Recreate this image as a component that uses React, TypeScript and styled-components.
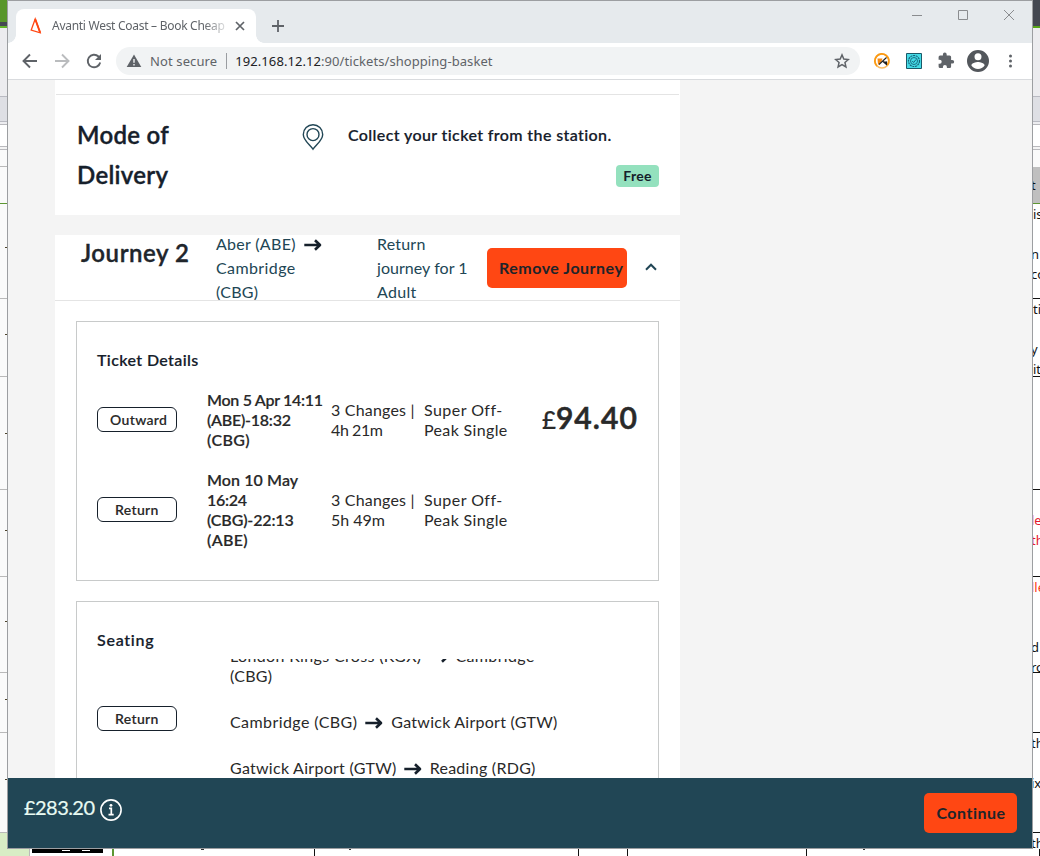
import React from "react";
import styled, { createGlobalStyle } from "styled-components";

const Global = createGlobalStyle`
  * { box-sizing: border-box; }
  body { margin: 0; background: #fff; overflow: hidden; }
`;

const ink = "#16202b";
const body = "#292929";
const teal = "#214655";
const orange = "#ff4713";
const rule = "#e4e4e4";

/* ---------- Desktop and the spreadsheet window behind ---------- */

const Desktop = styled.div`
  position: relative;
  width: 1040px;
  height: 856px;
  overflow: hidden;
  background: #fff;
`;

const Backdrop = styled.div`
  display: flex;
  flex-direction: column;
  height: 856px;
`;

const BackdropMain = styled.div`
  display: flex;
  justify-content: space-between;
  height: 849px;
`;

const Gutter = styled.div<{ $w: number }>`
  display: flex;
  flex-direction: column;
  width: ${(p) => p.$w}px;
  overflow: hidden;
`;

const Cell = styled.div<{ $h: number; $bg?: string; $line?: string; $pt?: number; $c?: string }>`
  flex: none;
  height: ${(p) => p.$h}px;
  padding-top: ${(p) => p.$pt ?? 0}px;
  overflow: hidden;
  background: ${(p) => p.$bg ?? "#fff"};
  border-bottom: ${(p) => (p.$line ? `1px solid ${p.$line}` : "0")};
  color: ${(p) => p.$c ?? "#111"};
  font: 13px/20px "Noto Sans", sans-serif;
  white-space: pre;
`;

const CellText = styled.div`
  margin-left: -2px;
`;

const RowMark = styled.i<{ $y: number }>`
  display: block;
  width: 3px;
  height: 1px;
  margin: ${(p) => p.$y}px 0 0 5px;
  background: #4d432a;
`;

const BottomStrip = styled.div`
  display: flex;
  height: 7px;
  overflow: hidden;
`;

const BottomCell = styled.div<{ $w: number; $bg?: string; $line?: string; $lw?: number }>`
  flex: none;
  width: ${(p) => p.$w}px;
  height: 7px;
  background: ${(p) => p.$bg ?? "#fff"};
  border-right: ${(p) => p.$lw ?? 1}px solid ${(p) => p.$line ?? "#111"};
`;

const BlackBar = styled.div`
  display: flex;
  gap: 12px;
  width: 71px;
  height: 4px;
  margin-left: 2px;
  padding: 1px 0 0 30px;
  background: #000;
`;

const Dash = styled.i<{ $c?: string; $x?: number; $w?: number }>`
  display: block;
  width: ${(p) => p.$w ?? 8}px;
  height: 1px;
  margin-left: ${(p) => p.$x ?? 0}px;
  background: ${(p) => p.$c ?? "#fff"};
`;

/* ---------- Browser window ---------- */

const Window = styled.div`
  position: absolute;
  left: 7px;
  top: 0;
  display: flex;
  flex-direction: column;
  width: 1026px;
  height: 849px;
  border: 1px solid #9c9ea1;
  background: #f4f4f4;
`;

const TabStrip = styled.div`
  display: flex;
  height: 42px;
  padding: 8px 0 0 0;
  background: #e6eaed;
`;

const TabFoot = styled.i<{ $right?: boolean }>`
  align-self: flex-end;
  width: 8px;
  height: 8px;
  background: radial-gradient(circle at ${(p) => (p.$right ? "100%" : "0")} 0, transparent 7.5px, #fff 8px);
`;

const Tab = styled.div`
  display: flex;
  align-items: center;
  width: 240px;
  height: 34px;
  padding: 0 10px 0 13px;
  border-radius: 8px 8px 0 0;
  background: #fff;
  svg { flex: none; }
`;

const TabTitle = styled.span`
  width: 173px;
  margin: 0 10px 0 9px;
  overflow: hidden;
  white-space: nowrap;
  font: 12px/20px "Noto Sans", sans-serif;
  letter-spacing: -0.28px;
  color: #5f6368;
  -webkit-mask-image: linear-gradient(90deg, #000 152px, rgba(0, 0, 0, 0.2) 173px);
`;

const NewTab = styled.div`
  padding: 10px 0 0 7px;
`;

const Controls = styled.div`
  display: flex;
  gap: 34px;
  margin-left: auto;
  padding-right: 17px;
`;

const Toolbar = styled.div`
  display: flex;
  align-items: center;
  height: 37px;
  padding-left: 13px;
  background: #fff;
  border-bottom: 1px solid #d9dbde;
  svg { flex: none; }
`;

const ToolbarIcons = styled.div`
  display: flex;
  align-items: center;
`;

const Omnibox = styled.div`
  display: flex;
  align-items: center;
  width: 745px;
  height: 28px;
  margin-left: 13px;
  padding: 0 10px;
  border-radius: 14px;
  background: #f1f3f4;
  font: 13px/20px "Noto Sans", sans-serif;
  white-space: nowrap;
  color: #5f6368;
`;

const Security = styled.span`
  margin-left: 8px;
  padding-right: 9px;
  border-right: 1px solid #9a9da1;
  line-height: 16px;
  letter-spacing: 0.12px;
`;

const Url = styled.span`
  margin-left: 8px;
  letter-spacing: 0.07px;
  b { font-weight: 400; color: #202124; }
`;

const StarSlot = styled.span`
  display: flex;
  margin-left: auto;
`;

/* ---------- Page ---------- */

const Page = styled.main`
  display: flex;
  flex-direction: column;
  height: 698px;
  padding-left: 47px;
  overflow: hidden;
  background: #f4f4f4;
  font-family: Lato, sans-serif;
`;

const Card = styled.section<{ $h: number }>`
  flex: none;
  width: 625px;
  height: ${(p) => p.$h}px;
  margin-bottom: 20px;
  padding: 0 1px;
  overflow: hidden;
  background: #fff;
`;

const DeliveryRow = styled.div`
  display: flex;
  height: 121px;
  margin-top: 14px;
  padding: 20px 20px 0 21px;
  border-top: 1px solid ${rule};
`;

const Heading = styled.h2<{ $ls?: number }>`
  margin: 0;
  font-size: 24px;
  font-weight: 600;
  line-height: 40px;
  letter-spacing: ${(p) => p.$ls ?? 0.3}px;
  color: ${ink};
  -webkit-text-stroke: 0.35px ${ink};
`;

const DeliveryInfo = styled.div`
  flex: 1;
  display: flex;
  flex-direction: column;
  align-items: flex-end;
`;

const DeliveryText = styled.p`
  width: 311px;
  margin: 0 0 20px;
  font-size: 16px;
  font-weight: 600;
  line-height: 40px;
  letter-spacing: 0.37px;
  color: ${ink};
  -webkit-text-stroke: 0.15px ${ink};
`;

const Badge = styled.span`
  width: 43px;
  height: 22px;
  margin-top: -10px;
  border-radius: 4px;
  background: #94e1be;
  text-align: center;
  font-size: 14px;
  font-weight: 700;
  line-height: 22px;
  letter-spacing: 0.25px;
  color: ${ink};
`;

const JourneyHeader = styled.header`
  display: flex;
  height: 66px;
  margin: 0 -1px;
  border-bottom: 1px solid ${rule};
  overflow: hidden;
`;

const JourneyTitle = styled(Heading)`
  width: 161px;
  padding-left: 26px;
  line-height: 35px;
  white-space: nowrap;
  color: #22262b;
`;

const HeaderText = styled.div<{ $w: number }>`
  flex: none;
  width: ${(p) => p.$w}px;
  margin-top: -3px;
  font-size: 16px;
  line-height: 24px;
  color: ${teal};
  white-space: nowrap;
`;

const Line = styled.div<{ $ls?: number }>`
  letter-spacing: ${(p) => p.$ls ?? 0.3}px;
`;

const Station = styled.span<{ $ls: number }>`
  letter-spacing: ${(p) => p.$ls}px;
`;

const Button = styled.button<{ $w: number; $left?: boolean }>`
  flex: none;
  width: ${(p) => p.$w}px;
  height: 40px;
  padding: ${(p) => (p.$left ? "0 0 0 12px" : "0 0 0 1px")};
  border: 0;
  border-radius: 5px;
  background: ${orange};
  text-align: ${(p) => (p.$left ? "left" : "center")};
  white-space: nowrap;
  font: 700 16px/40px Lato, sans-serif;
  letter-spacing: 0.5px;
  color: #20242a;
`;

const HeaderAction = styled.div`
  display: flex;
  align-items: flex-start;
  padding-top: 13px;
`;

const Chevron = styled.svg`
  margin: 15px 0 0 18px;
`;

const Panel = styled.section<{ $h: number }>`
  width: 583px;
  height: ${(p) => p.$h}px;
  margin: 20px 0 0 20px;
  padding: 28px 20px 0;
  border: 1px solid #c8caca;
`;

const PanelTitle = styled.h3<{ $ls?: number }>`
  margin: 0;
  font-size: 16px;
  font-weight: 600;
  line-height: 20px;
  letter-spacing: ${(p) => p.$ls ?? 0.37}px;
  color: ${ink};
  -webkit-text-stroke: 0.15px ${ink};
`;

const TicketRow = styled.div<{ $h: number }>`
  display: flex;
  align-items: center;
  height: ${(p) => p.$h}px;
  margin-top: 20px;
  font-size: 16px;
  line-height: 20px;
  white-space: nowrap;
  color: ${body};
`;

const Pill = styled.span<{ $pl: number; $raised?: boolean }>`
  flex: none;
  width: 80px;
  height: 25px;
  margin-top: ${(p) => (p.$raised ? -2 : 0)}px;
  padding-left: ${(p) => p.$pl}px;
  border: 1px solid ${ink};
  border-radius: 6px;
  font-size: 14px;
  font-weight: 600;
  line-height: 23px;
  letter-spacing: 0.33px;
  color: ${body};
  -webkit-text-stroke: 0.1px ${body};
`;

const Column = styled.div<{ $w: number; $ml?: number; $bold?: boolean }>`
  flex: none;
  width: ${(p) => p.$w}px;
  margin-left: ${(p) => p.$ml ?? 0}px;
  font-weight: ${(p) => (p.$bold ? 600 : 400)};
  -webkit-text-stroke: ${(p) => (p.$bold ? 0.15 : 0)}px ${body};
`;

const Price = styled.div`
  margin: -3px 0 0 17px;
  font-size: 30px;
  font-weight: 600;
  line-height: 36px;
  letter-spacing: 1.05px;
  -webkit-text-stroke: 0.6px ${body};
  small { font-size: 24px; font-weight: 500; letter-spacing: 0; -webkit-text-stroke: 0.2px ${body}; }
`;

const SeatingBody = styled.div`
  display: flex;
  height: 130px;
  margin-top: 9px;
  overflow: hidden;
  font-size: 16px;
  line-height: 20px;
  white-space: nowrap;
  color: ${body};
`;

const SeatingPill = styled.div`
  display: flex;
  padding-top: 47px;
`;

const Legs = styled.div`
  display: flex;
  flex-direction: column;
  gap: 26px;
  margin: -13px 0 0 53px;
`;

const ArrowIcon = styled.svg<{ $ml?: number; $mr?: number }>`
  margin: 0 ${(p) => p.$mr ?? 8}px 0 ${(p) => p.$ml ?? 8}px;
  vertical-align: -1px;
`;

const Footer = styled.footer`
  display: flex;
  justify-content: space-between;
  height: 70px;
  padding: 15px 15px 0 16px;
  background: ${teal};
  font-family: Lato, sans-serif;
`;

const Total = styled.div`
  display: flex;
  gap: 6px;
  color: #e9fbf3;
  font-size: 20px;
  line-height: 29px;
  letter-spacing: -0.55px;
  -webkit-text-stroke: 0.2px #e9fbf3;
  svg { margin-top: 6px; }
`;

const PinSlot = styled.div`
  margin: 9px -91px 0 133px;
`;

/* ---------- Icons ---------- */

const Arrow = ({ ml, mr }: { ml?: number; mr?: number }) => (
  <ArrowIcon $ml={ml} $mr={mr} width="18" height="12" viewBox="0 0 18 12" fill="none" stroke={ink} strokeWidth="2.6">
    <path d="M.3 6H15.5M11 1.3 16 6l-5 4.7" strokeLinejoin="round" />
  </ArrowIcon>
);

const Pin = () => (
  <svg width="22" height="27" viewBox="0 0 22 27" fill="none" stroke={teal} strokeWidth="1.4">
    <path d="M11 25.2C8 20.8 1.3 16.2 1.3 10.4a9.7 9.7 0 0 1 19.4 0C20.7 16.2 14 20.8 11 25.2Z" />
    <circle cx="11" cy="10.6" r="6" />
  </svg>
);

/* height, fill, bottom rule, offset of the row mark */
const leftCells: [number, string, string?, number?][] = [
  [22, "#58962a"], [4, "#444851"], [2, "#62b52a"], [69, "#ececef", "#b9bac2"], [25, "#dedfe4", "#b9bac2"],
  [3, "#ededf0", "#b9b9bd"], [22, "#fff", "#b9b9bd"], [3, "#f4f4f4", "#b9b9bd"], [17, "#fafafa", "#b9b9b9"],
  [37, "#fafafa", "#5d9732"], [95, "#fafafa", "#b9b9b9", 43], [78, "#fafafa", "#b9b9b9", 35], [113, "#fafafa", "#b9b9b9", 56],
  [87, "#fafafa", "#b9b9b9", 40], [96, "#fafafa", "#b9b9b9", 44], [60, "#fafafa", "#b9b9b9", 26], [100, "#fafafa", "#b9b9b9", 46],
  [16, "#d8edc5"],
];

export default function App() {
  return (
    <>
      <Global />
      <Desktop>
        <Backdrop>
          <BackdropMain>
            <Gutter $w={8}>
              {leftCells.map(([h, bg, line, mark], i) => (
                <Cell key={i} $h={h} $bg={bg} $line={line}>
                  {mark !== undefined && <RowMark $y={mark} />}
                </Cell>
              ))}
            </Gutter>
            <Gutter $w={7}>
              <Cell $h={26} $bg="#444851" />
              <Cell $h={2} $bg="#58a618" />
              <Cell $h={69} $bg="#ececef" $line="#b9bac2" />
              <Cell $h={25} $bg="#dedfe4" $line="#b9bac2" />
              <Cell $h={3} $bg="#ededf0" $line="#b9b9bd" />
              <Cell $h={22} $bg="#fff" $line="#b9b9bd" />
              <Cell $h={3} $bg="#f4f4f4" $line="#b9b9bd" />
              <Cell $h={17} $bg="#fafafa" />
              <Cell $h={37} $bg="#bfbfbf" $line="#5d9732" $pt={8}><CellText>t</CellText></Cell>
              <Cell $h={95} $line="#111">{"is\n\n"}<CellText>{"n\nco"}</CellText></Cell>
              <Cell $h={78} $line="#111">{"ti\n\n"}<CellText>{"y f"}</CellText>it</Cell>
              <Cell $h={113} $line="#111" />
              <Cell $h={87} $line="#111" $pt={20} $c="#e3182d"><CellText>{"le\nth"}</CellText></Cell>
              <Cell $h={60} $c="#ff3b14"><CellText>lle</CellText></Cell>
              <Cell $h={36} $line="#111"><CellText>{"d v\nro"}</CellText></Cell>
              <Cell $h={60} $line="#111" />
              <Cell $h={100} $line="#111"><CellText>{"th\n\nix"}</CellText></Cell>
              <Cell $h={16}><CellText>th</CellText></Cell>
            </Gutter>
          </BackdropMain>
          <BottomStrip>
            <BottomCell $w={30} $bg="#d8edc5" $line="#b9b9b9" />
            <BlackBar><Dash /><Dash /></BlackBar>
            <BottomCell $w={11} $line="#5d9732" $lw={2} />
            <BottomCell $w={201}><Dash $c="#333" $x={87} $w={3} /></BottomCell>
            <BottomCell $w={264}><Dash $c="#333" $x={34} $w={2} /></BottomCell>
            <BottomCell $w={49} />
            <BottomCell $w={179} />
            <BottomCell $w={233}><Dash $c="#333" $x={56} $w={2} /></BottomCell>
          </BottomStrip>
        </Backdrop>

        <Window>
          <TabStrip>
            <TabFoot />
            <Tab>
              <svg width="14" height="18" viewBox="0 0 14 18" fill="none" stroke={orange} strokeWidth="1.3">
                <path d="M6.2 2 2.2 13 11.2 15.800Z" />
                <path d="M6.2 2 11.2 15.800" strokeWidth="1.9" />
              </svg>
              <TabTitle>Avanti West Coast – Book Cheap</TabTitle>
              <svg width="10" height="10" viewBox="0 0 10 10" stroke="#5f6368" strokeWidth="1.7"><path d="M1 1l8 8M9 1l-8 8" /></svg>
            </Tab>
            <TabFoot $right />
            <NewTab>
              <svg width="14" height="14" viewBox="0 0 14 14" stroke="#5f6368" strokeWidth="1.8"><path d="M7 1v12M1 7h12" /></svg>
            </NewTab>
            <Controls>
              <svg width="12" height="12" stroke="#8a8c8f"><path d="M1 6.5h10" /></svg>
              <svg width="12" height="12" fill="none" stroke="#8a8c8f"><path d="M1.5 1.5h9v9h-9z" /></svg>
              <svg width="12" height="12" stroke="#8a8c8f"><path d="M1 1l10 10M11 1L1 11" /></svg>
            </Controls>
          </TabStrip>
          <Toolbar>
            <ToolbarIcons>
              <svg width="18" height="18" viewBox="0 0 18 18" fill="none" stroke="#5f6368" strokeWidth="1.9"><path d="M16 9H3M9 2.5 2.5 9 9 15.5" /></svg>
              <svg width="46" height="18" viewBox="-14 0 46 18" fill="none" stroke="#babcbe" strokeWidth="1.9"><path d="M2 9h13M9 2.5 15.5 9 9 15.5" /></svg>
              <svg width="18" height="18" viewBox="0 0 18 18" fill="none" stroke="#5f6368" strokeWidth="1.9"><path d="M15.2 10.5A6.3 6.3 0 1 1 13.5 4.5L15 6" /><path d="M16 2v6h-6z" fill="#5f6368" stroke="none" /></svg>
            </ToolbarIcons>
            <Omnibox>
              <svg width="16" height="16" viewBox="0 0 16 16"><path d="M8 1.5 15.3 14H.7Z" fill="#5f6368" /><path d="M8 6v3.800M8 11v1.500" stroke="#f1f3f4" strokeWidth="1.4" /></svg>
              <Security>Not secure</Security>
              <Url><b>192.168.12.12</b>:90/tickets/shopping-basket</Url>
              <StarSlot>
                <svg width="16" height="16" viewBox="0 0 24 24" fill="none" stroke="#5f6368" strokeWidth="2.2"><path d="m12 2.800 2.700 6.300 6.800.6-5.100 4.500 1.500 6.700L12 17.300l-5.900 3.600 1.500-6.700-5.100-4.500 6.800-.6Z" /></svg>
              </StarSlot>
            </Omnibox>
            <ToolbarIcons>
              <svg width="46" height="24" viewBox="-14 -4 46 24">
                <circle cx="8" cy="8" r="7" fill="#fff" stroke="#fbbb60" strokeWidth="1.6" />
                <path d="M3 13A7 7 0 1 1 13.500 12" fill="none" stroke="#fb9a13" strokeWidth="1.8" />
                <path d="M3.500 5.500h5L7.500 8.500 4 12Z" fill="#f58a13" />
                <path d="M5 11.500 12.500 4.500M9 8.500l3.500 3V8.500" stroke="#222" strokeWidth="1.1" fill="#222" />
              </svg>
              <svg width="16" height="16" viewBox="0 0 16 16">
                <path d="M.5.5h15v15H.5z" fill="#45dbe6" stroke="#1b5968" />
                <circle cx="8" cy="8" r="5.500" fill="none" stroke="#17627a" strokeWidth="1.2" strokeDasharray="2 .7" />
                <circle cx="8" cy="8" r="3.500" fill="none" stroke="#17627a" strokeWidth=".9" />
                <path d="m6.300 8 1.300 1.500L10 6.500" fill="none" stroke="#17627a" />
              </svg>
              <svg width="44" height="18" viewBox="-16.5 0 44 18">
                <path d="M13.800 7.900h-1.200V5a1.500 1.500 0 0 0-1.500-1.500H8.200V2.400a1.900 1.900 0 0 0-3.800 0v1.100H1.600A1.500 1.500 0 0 0 .1 5v2.700h1.100a2 2 0 0 1 0 4H.1v2.800A1.500 1.500 0 0 0 1.600 16h2.800v-1.100a2 2 0 0 1 4 0V16h2.700a1.500 1.500 0 0 0 1.500-1.500v-2.900h1.200a1.850 1.850 0 0 0 0-3.700Z" fill="#5f6368" />
              </svg>
              <svg width="24" height="24" viewBox="0 0 24 24">
                <path fill="#53575c" d="M12 1a11 11 0 1 0 0 22 11 11 0 0 0 0-22Zm0 3.300a3.500 3.500 0 1 1 0 7 3.500 3.500 0 0 1 0-7Zm0 15.700a8 8 0 0 1-6.600-3.500c0-2.200 4.400-3.400 6.600-3.400s6.600 1.200 6.600 3.400A8 8 0 0 1 12 20Z" />
              </svg>
              <svg width="42" height="16" viewBox="-17 0 42 16" fill="#5f6368"><circle cx="3.500" cy="3" r="1.500" /><circle cx="3.500" cy="8" r="1.500" /><circle cx="3.500" cy="13" r="1.500" /></svg>
            </ToolbarIcons>
          </Toolbar>

          <Page>
            <Card $h={135}>
              <DeliveryRow>
                <Heading>Mode of<br />Delivery</Heading>
                <PinSlot><Pin /></PinSlot>
                <DeliveryInfo>
                  <DeliveryText>Collect your ticket from the station.</DeliveryText>
                  <Badge>Free</Badge>
                </DeliveryInfo>
              </DeliveryRow>
            </Card>

            <Card $h={560}>
              <JourneyHeader>
                <JourneyTitle $ls={0.55}>Journey 2</JourneyTitle>
                <HeaderText $w={161}>
                  <Line>Aber (ABE)<Arrow /></Line>
                  <Line $ls={0.4}>Cambridge</Line>
                  <Line>(CBG)</Line>
                </HeaderText>
                <HeaderText $w={110}>
                  <Line $ls={0.2}>Return</Line>
                  <Line $ls={0.05}>journey for 1</Line>
                  <Line>Adult</Line>
                </HeaderText>
                <HeaderAction>
                  <Button $w={140} $left>Remove Journey</Button>
                  <Chevron width="12" height="8" viewBox="0 0 12 8" fill="none" stroke={teal} strokeWidth="2"><path d="M1 6.800 6 1.700l5 5.100" /></Chevron>
                </HeaderAction>
              </JourneyHeader>

              <Panel $h={260}>
                <PanelTitle>Ticket Details</PanelTitle>
                <TicketRow $h={60}>
                  <Pill $pl={12} $raised>Outward</Pill>
                  <Column $ml={30} $w={124} $bold>
                    <Line $ls={-0.3}>Mon 5 Apr 14:11</Line>
                    <Line $ls={-0.25}>(ABE)-18:32</Line>
                    <Line $ls={0.4}>(CBG)</Line>
                  </Column>
                  <Column $w={93}>
                    <Line $ls={0.2}>3 Changes |</Line>
                    <Line $ls={-0.4}>4h 21m</Line>
                  </Column>
                  <Column $w={101}>
                    <Line $ls={0.45}>Super Off-</Line>
                    <Line $ls={0.35}>Peak Single</Line>
                  </Column>
                  <Price><small>£</small>94.40</Price>
                </TicketRow>
                <TicketRow $h={80}>
                  <Pill $pl={17} $raised>Return</Pill>
                  <Column $ml={30} $w={124} $bold>
                    <Line $ls={0.1}>Mon 10 May</Line>
                    <Line $ls={-0.3}>16:24</Line>
                    <Line $ls={-0.15}>(CBG)-22:13</Line>
                    <Line $ls={0.3}>(ABE)</Line>
                  </Column>
                  <Column $w={93}>
                    <Line $ls={0.2}>3 Changes |</Line>
                    <Line $ls={0}>5h 49m</Line>
                  </Column>
                  <Column $w={101}>
                    <Line $ls={0.45}>Super Off-</Line>
                    <Line $ls={0.35}>Peak Single</Line>
                  </Column>
                </TicketRow>
              </Panel>

              <Panel $h={260}>
                <PanelTitle $ls={0.72}>Seating</PanelTitle>
                <SeatingBody>
                  <SeatingPill><Pill $pl={17}>Return</Pill></SeatingPill>
                  <Legs>
                    <div>
                      <Line $ls={0.35}>London Kings Cross (KGX)<Arrow ml={9} mr={7} />Cambridge</Line>
                      <Line>(CBG)</Line>
                    </div>
                    <Line $ls={0.42}>Cambridge (CBG)<Arrow /><Station $ls={0.25}>Gatwick Airport (GTW)</Station></Line>
                    <Line $ls={0.27}>Gatwick Airport (GTW)<Arrow ml={7} />Reading (RDG)</Line>
                  </Legs>
                </SeatingBody>
              </Panel>
            </Card>
          </Page>

          <Footer>
            <Total>
              £283.20
              <svg width="22" height="22" viewBox="0 0 22 22" fill="none" stroke="#fff" strokeWidth="1.6">
                <circle cx="11" cy="11" r="10.100" />
                <path d="M9 9.300h2.300v6M8.500 15.600h5.200" strokeWidth="1.7" />
                <circle cx="11" cy="6.300" r="1.400" fill="#fff" stroke="none" />
              </svg>
            </Total>
            <Button $w={93}>Continue</Button>
          </Footer>
        </Window>
      </Desktop>
    </>
  );
}
